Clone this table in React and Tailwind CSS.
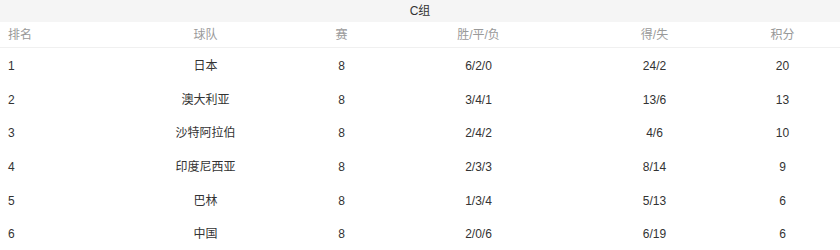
import React from "react";

const rows = [
  ["1", "日本", "8", "6/2/0", "24/2", "20"],
  ["2", "澳大利亚", "8", "3/4/1", "13/6", "13"],
  ["3", "沙特阿拉伯", "8", "2/4/2", "4/6", "10"],
  ["4", "印度尼西亚", "8", "2/3/3", "8/14", "9"],
  ["5", "巴林", "8", "1/3/4", "5/13", "6"],
  ["6", "中国", "8", "2/0/6", "6/19", "6"],
];

const cols = "grid grid-cols-[101px_209px_63px_211px_141px_115px]";

// Group standings table
function App() {
  return (
    <div className="w-[840px] bg-white text-[12px] font-['Liberation_Sans','Noto_Sans_CJK_SC',sans-serif]">
      <div className="h-[22px] bg-[#f5f5f5] flex items-center justify-center text-[#333]">C组</div>

      {/* Header */}
      <div className={`${cols} h-[26px] items-center border-b border-[#f0f0f0] text-[#999]`}>
        <div className="pl-2">排名</div>
        <div className="text-center">球队</div>
        <div className="text-center">赛</div>
        <div className="text-center">胜/平/负</div>
        <div className="text-center">得/失</div>
        <div className="text-center">积分</div>
      </div>

      {/* Rows */}
      {rows.map((r) => (
        <div key={r[0]} className={`${cols} h-[33.7px] pt-[2px] items-center text-[#333]`}>
          <div className="pl-2">{r[0]}</div>
          {r.slice(1).map((c, i) => (
            <div key={i} className="text-center">
              {c}
            </div>
          ))}
        </div>
      ))}
    </div>
  );
}

export default App;
